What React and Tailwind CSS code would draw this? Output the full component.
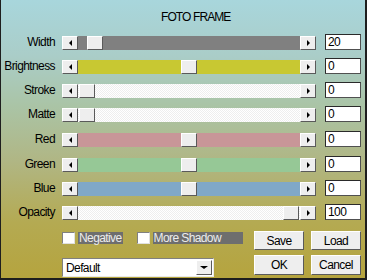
import React from 'react';

const rows = [
    { label: 'Width', value: '20', track: 'bg-[#808080]', pos: 9 },
    { label: 'Brightness', value: '0', track: 'bg-[#c8c832]', pos: 103 },
    { label: 'Stroke', value: '0', track: 'hatch', pos: 1 },
    { label: 'Matte', value: '0', track: 'hatch', pos: 1 },
    { label: 'Red', value: '0', track: 'bg-[#c89698]', pos: 103, mt: 'mt-[1px]' },
    { label: 'Green', value: '0', track: 'bg-[#96c896]', pos: 103, mt: 'mt-[1px]' },
    { label: 'Blue', value: '0', track: 'bg-[#80a8c8]', pos: 103 },
    { label: 'Opacity', value: '100', track: 'hatch', pos: 205 },
];

const raised = 'border border-t-white border-l-white border-b-[#5a5a5a] border-r-[#5a5a5a] bg-[#eeeeee]';

const ArrowBtn = ({ dir }) => (
    <div className={`w-[16px] h-[14px] flex items-center justify-center shrink-0 ${raised}`}>
        {dir === 'left' ? (
            <div className="w-0 h-0 border-y-[3px] border-y-transparent border-r-[3px] border-r-black" />
        ) : (
            <div className="w-0 h-0 border-y-[3px] border-y-transparent border-l-[3px] border-l-black" />
        )}
    </div>
);

const ScrollBar = ({ track, pos }) => {
    const trackCls = track === 'hatch'
        ? 'bg-[repeating-conic-gradient(#ffffff_0%_25%,#eeeeee_0%_50%)] bg-[length:2px_2px]'
        : track;
    return (
        <div className="w-[254px] h-[14px] mt-[2px] ml-[7px] flex">
            <ArrowBtn dir="left" />
            <div className={`flex-1 h-full ${trackCls}`}>
                {/* thumb offset comes from the row data */}
                <div className={`w-[16px] h-[14px] ${raised}`} style={{ marginLeft: pos }} />
            </div>
            <ArrowBtn dir="right" />
        </div>
    );
};

const PushButton = ({ children, h }) => (
    <div className={`w-[50px] ${h} flex items-center justify-center text-black ${raised}`}>
        {children}
    </div>
);

const App = () => {
    return (
        <div
            className="w-[367px] h-[280px] overflow-hidden border-l border-r-2 border-b-2 border-[#1e1e1e] bg-[linear-gradient(180deg,#a8d6dc_0%,#aacdc8_20%,#aac4a6_38%,#b0b684_58%,#b4aa52_80%,#b5a43e_100%)] text-[12px] tracking-[-0.6px] text-black"
            style={{ fontFamily: '"Liberation Sans", Arial, sans-serif' }}
        >
            <div className="pt-[10px] pl-[160px] h-[24px] leading-[14px] tracking-[-0.9px]">FOTO FRAME</div>

            <div className="mt-[10px] flex flex-col gap-[8px]">
                {rows.map((r) => (
                    <div key={r.label} className={`flex h-[16px] ${r.mt || ''}`}>
                        <div className="w-[54px] text-right leading-[16px]">{r.label}</div>
                        <ScrollBar track={r.track} pos={r.pos} />
                        <div className="ml-[9px] w-[36px] h-[16px] bg-white border border-[#505050] border-t-[#2a2a2a] border-l-[#2a2a2a] pl-[2px] leading-[14px]">
                            {r.value}
                        </div>
                    </div>
                ))}
            </div>

            <div className="ml-[61px] mt-[11px] flex">
                <div className="w-[192px] flex mt-[1px] h-[12px]">
                    <div className="w-[13px] h-[12px] bg-white border border-t-[#808080] border-l-[#808080] border-b-[#e0e0e0] border-r-[#e0e0e0]" />
                    <div className="ml-[3px] h-[12px] px-[1px] bg-[#6e6e6e] text-[#ececec] leading-[12px]">Negative</div>
                    <div className="ml-[14px] w-[13px] h-[12px] bg-white border border-t-[#808080] border-l-[#808080] border-b-[#e0e0e0] border-r-[#e0e0e0]" />
                    <div className="ml-[3px] w-[90px] h-[12px] px-[1px] bg-[#6e6e6e] text-[#ececec] leading-[12px]">More Shadow</div>
                </div>
                <PushButton h="h-[19px]">Save</PushButton>
                <div className="ml-[7px]">
                    <PushButton h="h-[19px]">Load</PushButton>
                </div>
            </div>

            <div className="ml-[61px] mt-[5px] flex">
                <div className="w-[152px] h-[19px] mt-[3px] bg-white border border-t-[#808080] border-l-[#808080] border-b-[#e8e8e8] border-r-[#e8e8e8] flex items-center justify-between">
                    <span className="pl-[3px] leading-[14px]">Default</span>
                    <div className={`w-[16px] h-[15px] mr-[1px] flex items-center justify-center ${raised}`}>
                        <div className="w-0 h-0 border-x-[4px] border-x-transparent border-t-[3px] border-t-black" />
                    </div>
                </div>
                <div className="ml-[40px]">
                    <PushButton h="h-[20px]">OK</PushButton>
                </div>
                <div className="ml-[7px]">
                    <PushButton h="h-[20px]">Cancel</PushButton>
                </div>
            </div>
        </div>
    );
};

export default App;
